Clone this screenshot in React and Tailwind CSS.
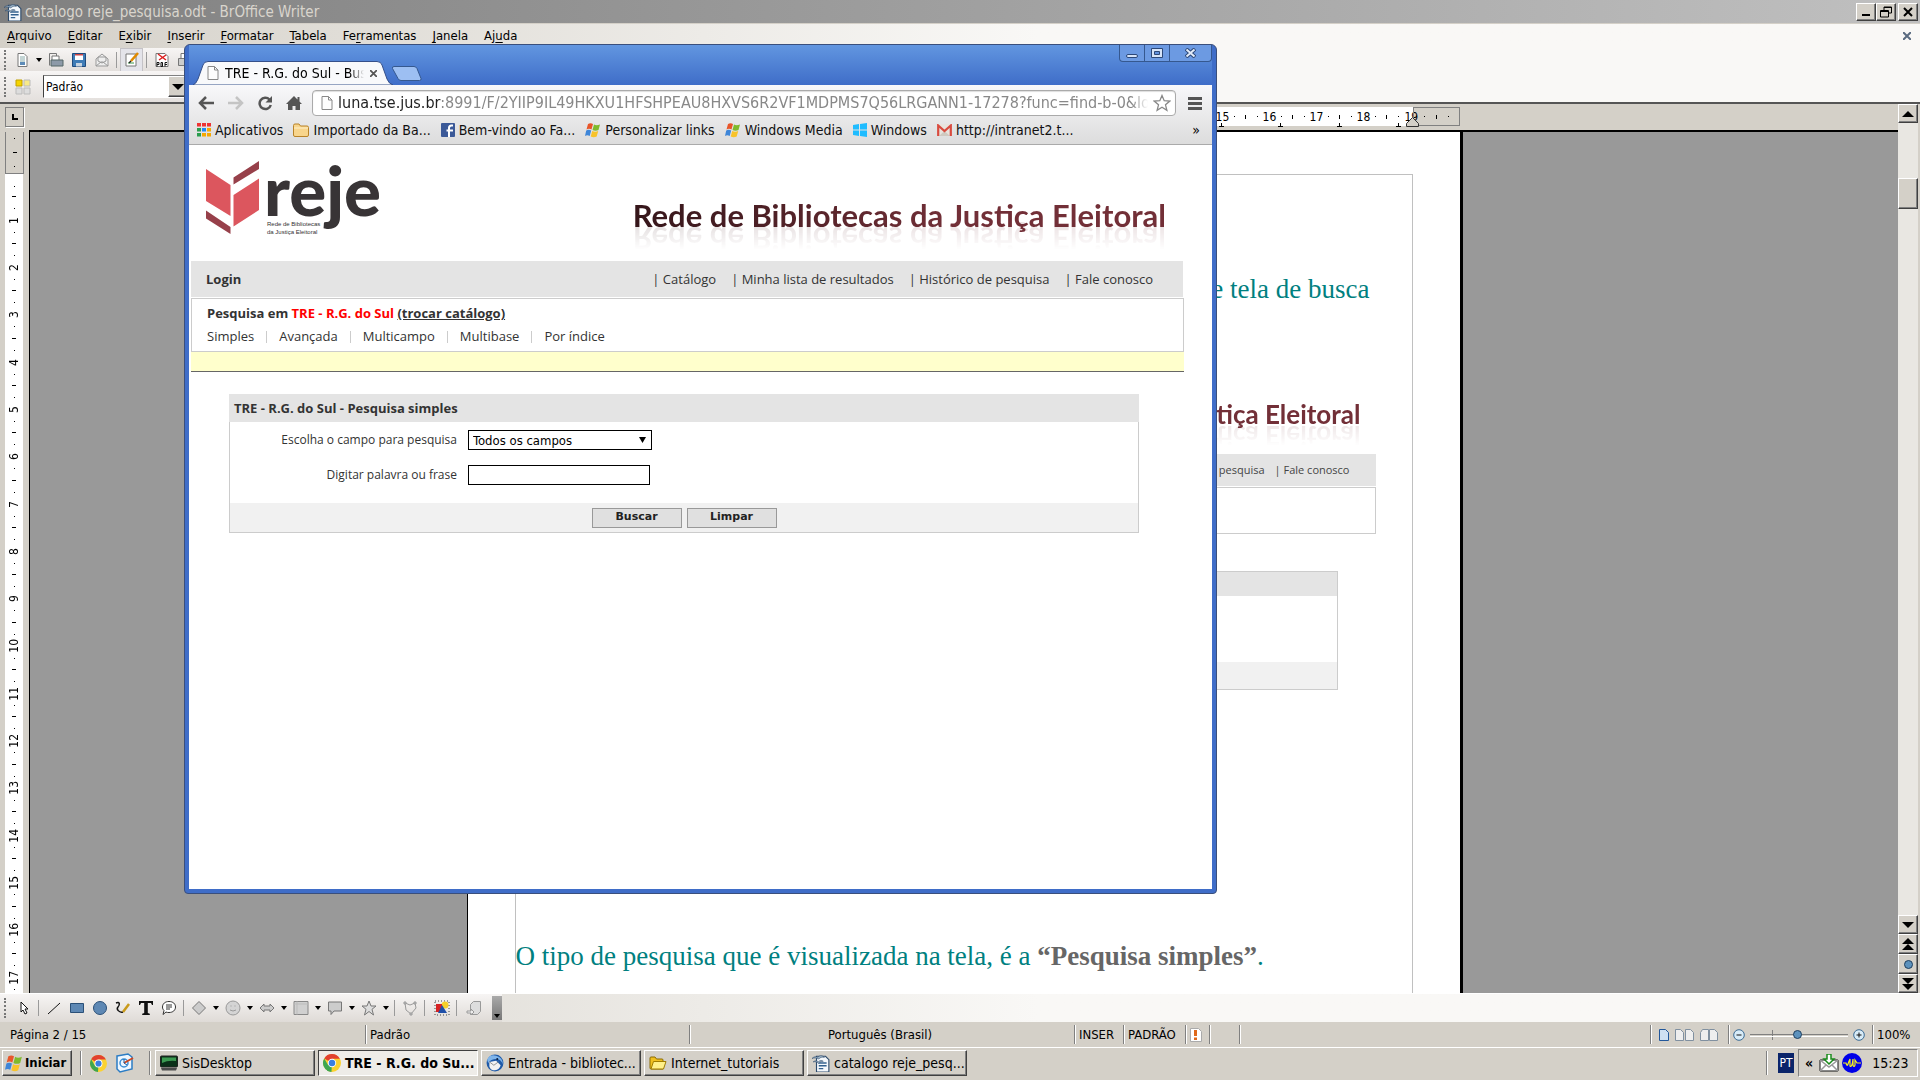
import { useState } from 'react'

const UI = "font-['DejaVu_Sans_Condensed','Noto_Sans',sans-serif]"
const WEB = "font-['Open_Sans','Noto_Sans',sans-serif]"
const RAISED = 'border border-t-white border-l-white border-r-[#404040] border-b-[#404040] bg-[#d4d0c8] shadow-[inset_-1px_-1px_0_#808080]'

const menus = [
  ['', 'A', 'rquivo'],
  ['', 'E', 'ditar'],
  ['E', 'x', 'ibir'],
  ['', 'I', 'nserir'],
  ['', 'F', 'ormatar'],
  ['', 'T', 'abela'],
  ['Fe', 'r', 'ramentas'],
  ['', 'J', 'anela'],
  ['Aj', 'u', 'da'],
]

const bookmarks = [
  { label: 'Aplicativos', icon: AppsIcon },
  { label: 'Importado da Ba...', icon: FolderIcon },
  { label: 'Bem-vindo ao Fa...', icon: FacebookIcon },
  { label: 'Personalizar links', icon: WindowsFlag },
  { label: 'Windows Media', icon: WindowsFlag },
  { label: 'Windows', icon: WindowsTiles },
  { label: 'http://intranet2.t...', icon: GmailIcon },
]

const tasks = [
  { label: 'SisDesktop', icon: MonitorIcon },
  { label: 'TRE - R.G. do Su...', icon: ChromeIcon, active: true },
  { label: 'Entrada - bibliotec...', icon: ThunderbirdIcon },
  { label: 'Internet_tutoriais', icon: YellowFolderIcon },
  { label: 'catalogo reje_pesq...', icon: WriterIcon },
]

/* ---------- icons ---------- */

function WriterIcon({ className = 'size-4' }) {
  return (
    <svg viewBox="0 0 16 16" className={className} aria-hidden="true">
      <path d="M4 2h8l3 3v11H4z" fill="#f4f8fc" stroke="#2c4a6b" />
      <path d="M6 8h7M6 10.500h7M6 13h4" stroke="#33618f" strokeWidth="1.300" />
      <path d="M0 4c2-2 4-2 5-1 2-2 4-2 6 0-2-.5-4 0-5 1.500C4.500 3.500 2 3 0 4zM1 7c2-1.500 3.500-1 4.500 0C7 5.500 9 5.500 10 6.500 8 6.500 7 7 6 8.500 4.500 7 3 6.500 1 7z" fill="#9fb6c8" stroke="#2c4a6b" strokeWidth=".5" />
    </svg>
  )
}

function AppsIcon() {
  const colors = ['#e33', '#e33', '#e33', '#2a9d4e', '#1e88f5', '#f5a800', '#2a9d4e', '#f5a800', '#f5a800']
  return (
    <svg viewBox="0 0 14 14" className="size-3.5" aria-hidden="true">
      {colors.map((c, i) => (
        <rect key={i} x={(i % 3) * 5} y={Math.floor(i / 3) * 5} width="4" height="3.500" fill={c} />
      ))}
    </svg>
  )
}

function FolderIcon() {
  return (
    <svg viewBox="0 0 16 14" className="h-3.5 w-4" aria-hidden="true">
      <path d="M.5 12V2.500Q.5 1 2 1h4l1.500 2H14q1.500 0 1.500 1.500V12q0 1.500-1.500 1.500H2Q.5 13.500.5 12z" fill="#f8d58c" stroke="#b98328" />
      <path d="M1 5h14" stroke="#fff0c8" />
    </svg>
  )
}

function FacebookIcon() {
  return (
    <svg viewBox="0 0 14 14" className="size-3.5" aria-hidden="true">
      <rect width="14" height="14" rx="1" fill="#3b5998" />
      <path d="M12 2.500h-1.500Q8 2.500 8 5v9M5.500 7.500H12" stroke="#fff" strokeWidth="2" fill="none" />
    </svg>
  )
}

function WindowsFlag({ className = 'size-4' }) {
  return (
    <svg viewBox="0 0 16 16" className={className} aria-hidden="true">
      <path d="M3 2q2.500-1.500 5 0L6.500 7.500Q4 6 1.500 7.500z" fill="#e8562a" />
      <path d="M9 2.500q2.500 1.500 6 0L13.500 8Q10.500 9.500 7.500 8z" fill="#7fba2c" />
      <path d="M1.200 8.500q2.500-1.500 5 0L4.700 14q-2.500-1.500-4.700 0z" fill="#3f86d8" />
      <path d="M7.200 9q3 1.500 6 0l-1.500 5.500q-3 1.500-6 0z" fill="#f8c32a" />
    </svg>
  )
}

function WindowsTiles() {
  return (
    <svg viewBox="0 0 14 14" className="size-3.5" aria-hidden="true">
      <path d="M0 2l6-1v5.500H0zM7 .9L14 0v6.500H7zM0 7.500h6V13l-6-1zM7 7.500h7V14l-7-.9z" fill="#1fbcff" />
    </svg>
  )
}

function GmailIcon() {
  return (
    <svg viewBox="0 0 15 12" className="h-3 w-[15px]" aria-hidden="true">
      <path d="M1 0h13v12H1z" fill="#e8e4de" />
      <path d="M2 12l5.500-5 5.500 5z" fill="#cfc9c0" />
      <path d="M1.200 12V1.500L7.500 7l6.300-5.500V12" fill="none" stroke="#d94b3f" strokeWidth="2.200" />
    </svg>
  )
}

function ChromeIcon({ className = 'size-4' }) {
  return (
    <svg viewBox="0 0 16 16" className={className} aria-hidden="true">
      <circle cx="8" cy="8" r="8" fill="#fbd22f" />
      <path d="M8 8L1.100 4A8 8 0 0 1 15 4.200H8z" fill="#e2412f" />
      <path d="M8 8l-3 7.400A8 8 0 0 1 1.100 4L4.600 10z" fill="#3fa650" />
      <path d="M8 8l-.5 8A8 8 0 0 1 3.500 14.600L4.600 10z" fill="#3fa650" />
      <circle cx="8" cy="8" r="3.700" fill="#fff" />
      <circle cx="8" cy="8" r="2.900" fill="#3b7fe0" />
    </svg>
  )
}

function ThunderbirdIcon({ className = 'size-4' }) {
  return (
    <svg viewBox="0 0 16 16" className={className} aria-hidden="true">
      <circle cx="8" cy="8" r="7.500" fill="#1f5aa8" />
      <path d="M1 5Q3 0 9 1.500 15 3 15 9q-2-5-7-4.500Q4 5 2 8z" fill="#7fb4ea" />
      <path d="M3 7l6-1 4 4q-1 4-5 4.500-4 0-5-3.500z" fill="#f2f2f2" />
      <path d="M3 7l4 3 4-3" stroke="#8a8a8a" fill="none" strokeWidth=".8" />
      <circle cx="10" cy="4.500" r=".9" fill="#0b1d3c" />
    </svg>
  )
}

function YellowFolderIcon({ className = 'size-4' }) {
  return (
    <svg viewBox="0 0 18 16" className={className} aria-hidden="true">
      <path d="M1 13V3q0-1 1-1h4l1.500 2H13q1 0 1 1v9H2q-1 0-1-1z" fill="#f0c020" stroke="#8a6a00" />
      <path d="M2 14L4.500 6.500H17L14.500 14z" fill="#fff08a" stroke="#a07c00" />
    </svg>
  )
}

function MonitorIcon({ className = 'size-4' }) {
  return (
    <svg viewBox="0 0 18 16" className={className} aria-hidden="true">
      <rect x=".5" y="1" width="17" height="11" rx="1" fill="#0a3018" stroke="#222" />
      <path d="M2 2.500h14V6Q8 5 2 8z" fill="#3c9a52" />
      <path d="M1 13h16l-1 2.500H2z" fill="#4b4b4b" />
    </svg>
  )
}

function NotesIcon() {
  return (
    <svg viewBox="0 0 20 20" className="size-5" aria-hidden="true">
      <path d="M2 3l11-2 4 3v12L5 19l-3-3z" fill="#eef7ff" stroke="#2b7cc4" strokeWidth="1.500" />
      <circle cx="9" cy="10" r="4" fill="none" stroke="#3b8fd6" strokeWidth="1.500" />
      <path d="M9 10l9-5" stroke="#d0451b" strokeWidth="2" />
      <path d="M9 6v4l3 2" stroke="#1b5da0" fill="none" />
    </svg>
  )
}

function PageIcon() {
  return (
    <svg viewBox="0 0 12 14" className="h-3.5 w-3" aria-hidden="true">
      <path d="M1 .5h6.500L11 4v9.500H1z" fill="#fdfdfd" stroke="#888" />
      <path d="M7.500.5V4H11" fill="none" stroke="#888" />
    </svg>
  )
}

function Caret({ className = 'h-1 w-1.5' }) {
  return (
    <svg viewBox="0 0 6 4" preserveAspectRatio="none" className={className} aria-hidden="true">
      <path d="M0 0h6L3 4z" />
    </svg>
  )
}

function Triangle({ up }) {
  return (
    <svg viewBox="0 0 12 6" className="h-1.5 w-3" aria-hidden="true">
      <path d={up ? 'M0 6h12L6 0z' : 'M0 0h12L6 6z'} />
    </svg>
  )
}

function ToolSvg({ children }) {
  return (
    <svg viewBox="0 0 16 16" className="size-4" fill="none" stroke="#777" aria-hidden="true">
      {children}
    </svg>
  )
}

/* ---------- writer window ---------- */

function Grip() {
  return <span className="h-5 shrink-0 border-l-2 border-dotted border-[#777]" />
}

function Sep() {
  return <span className="mx-[3px] h-4 w-px shrink-0 bg-[#9a9a9a]" />
}

function Tool({ label, menu, pressed, children }) {
  return (
    <button
      type="button"
      aria-label={label}
      className={`flex h-6 shrink-0 items-center ${menu ? 'w-[34px] gap-1.5 pl-1' : 'w-[23px] justify-center'} ${pressed ? 'border border-[#c4c2c6] bg-[#e4e4ea]' : ''}`}
    >
      <ToolSvg>{children}</ToolSvg>
      {menu && <Caret />}
    </button>
  )
}

function WriterTop() {
  return (
    <header>
      <div className="flex h-6 items-center border-b border-[#d4d0c8] bg-linear-to-r from-[#808080] to-[#c0c0c0] pr-0.5 pl-1">
        <WriterIcon className="size-[18px]" />
        <h1 className="ml-[3px] flex-1 text-[15px] leading-5 text-[#d9d5cd]">catalogo reje_pesquisa.odt - BrOffice Writer</h1>
        <div className="flex">
          <button type="button" aria-label="Minimizar" className={`flex h-[18px] w-5 items-end justify-center pb-1 ${RAISED}`}>
            <span className="h-0.5 w-2 bg-black" />
          </button>
          <button type="button" aria-label="Restaurar" className={`flex h-[18px] w-5 items-center justify-center ${RAISED}`}>
            <svg viewBox="0 0 12 12" className="size-3" fill="none" stroke="#000" aria-hidden="true">
              <path d="M4 4V1h7.500v6H9M4 1.500h7.500M.5 4.500h8v6.500h-8zM.5 5.500h8" />
            </svg>
          </button>
          <button type="button" aria-label="Fechar" className={`ml-0.5 flex h-[18px] w-5 items-center justify-center ${RAISED}`}>
            <svg viewBox="0 0 10 10" className="size-2.5" stroke="#000" strokeWidth="2" aria-hidden="true">
              <path d="M1 1l8 8M9 1L1 9" />
            </svg>
          </button>
        </div>
      </div>
      <div className="bg-linear-to-r from-[#d4d0c8] to-[#f9f8f6] to-54%">
        <nav className="flex h-6 items-center gap-4 px-[7px] pr-[9px] text-[13px]">
          {menus.map(([pre, key, post]) => (
            <button key={pre + key + post} type="button">
              {pre}<span className="underline underline-offset-2">{key}</span>{post}
            </button>
          ))}
          <button type="button" aria-label="Fechar documento" className="ml-auto">
            <svg viewBox="0 0 8 8" className="size-2" stroke="#5a6b80" strokeWidth="2" aria-hidden="true">
              <path d="M0 0l8 8M8 0L0 8" />
            </svg>
          </button>
        </nav>
      </div>
      <div className="bg-[#f9f8f6]">
        <div className="flex h-[23px] w-48 items-center overflow-hidden bg-linear-to-b from-[#f7f5f4] to-[#e3dfdc] pl-1">
          <Grip />
          <span className="w-1 shrink-0" />
          <Tool label="Novo" menu>
            <path d="M4 1.500h6l3 3v10H4z" fill="#fff" />
            <path d="M6 5h5M6 7h5M6 9h5" stroke="#8aa" />
            <path d="M6 10h5v3H6z" fill="#5d8bb8" stroke="none" />
          </Tool>
          <Tool label="Abrir">
            <path d="M1.500 1.500v12M1.500 1.500h7v3" />
            <path d="M4 4h7v5H4z" fill="#fff" />
            <path d="M3 8h12v6H3z" fill="#8d9aa8" stroke="#566" />
          </Tool>
          <Tool label="Salvar">
            <path d="M1.500 1.500h13v13h-13z" fill="#3f7cb6" stroke="#1f4b7d" />
            <path d="M4 2h8v6H4z" fill="#fff" stroke="none" />
            <path d="M4 2h8v1.500H4z" fill="#c44" stroke="none" />
            <path d="M5 11h6v3.500H5z" fill="#c8d4e0" stroke="none" />
          </Tool>
          <Tool label="Enviar e-mail">
            <path d="M2 7l6-5 6 5v7H2z" fill="#eee" stroke="#999" />
            <path d="M2 14l5-4h2l5 4M4 5h8v4l-4 2-4-2z" stroke="#999" />
          </Tool>
          <Sep />
          <Tool label="Editar arquivo" pressed>
            <path d="M2 2h10v12H2z" fill="#fff" />
            <path d="M4 11h6" stroke="#3a9a4a" />
            <path d="M14 1L7 9" stroke="#e08a00" strokeWidth="2.500" />
            <path d="M7 9l-2 2" stroke="#222" strokeWidth="1.500" />
          </Tool>
          <Sep />
          <Tool label="Exportar como PDF">
            <path d="M2 1.500h9l3 3v10H2z" fill="#fff" />
            <path d="M4 2l8 6M12 3L5 8" stroke="#d22" strokeWidth="1.500" />
            <path d="M3 10.500v4M3 10.500h2v2H3M7 10.500v4h1.500v-4zM11 14.500v-4h2M11 12.500h2" stroke="#111" />
          </Tool>
          <Tool label="Imprimir">
            <path d="M4 1.500h8v5H4z" fill="#fff" />
            <path d="M1.500 6.500h13v7h-13z" fill="#ccc" />
          </Tool>
        </div>
        <div className="flex h-[31px] w-48 items-center bg-linear-to-b from-[#f7f5f4] to-[#e3dfdc] pl-1">
          <Grip />
          <span className="w-[5px] shrink-0" />
          <Tool label="Estilos">
            <path d="M1 1h6v6H1z" fill="#f5d400" stroke="#c0a000" />
            <path d="M9 1h6v6H9z" fill="#f7e98a" stroke="#bbb" />
            <path d="M1 9h6v6H1zM9 9h6v6H9z" fill="#ddd" stroke="#bbb" />
          </Tool>
          <div className="ml-[9px] flex h-[23px] flex-1 items-center border border-t-[#808080] border-l-[#404040] border-r-white border-b-white bg-white">
            <select aria-label="Aplicar estilo" className="h-full w-[124px] appearance-none pl-0.5 text-xs">
              <option>Padrão</option>
            </select>
            <span className={`flex h-full w-5 items-center justify-center ${RAISED}`}><Triangle /></span>
          </div>
        </div>
      </div>
    </header>
  )
}

function VerticalRuler() {
  return (
    <div className="flex min-h-0 flex-1 flex-col overflow-hidden text-xs" aria-hidden="true">
      <div className="mt-[5px] flex h-[42px] w-[19px] shrink-0 flex-col items-center justify-around border-r border-b border-l border-[#808080]">
        <span className="size-px bg-black" />
        <span className="h-px w-1 bg-black" />
        <span className="size-px bg-black" />
      </div>
      <div className="w-[18px] flex-1 bg-white">
        <div className="flex h-4 items-center justify-center">
          <span className="mt-2 size-px bg-black" />
        </div>
        {Array.from({ length: 17 }).map((_, i) => (
          <div key={i} className={`grid grid-rows-4 place-items-center ${i % 3 === 0 ? 'h-12' : 'h-[47px]'}`}>
            <span className="h-px w-1 bg-black" />
            <span className="size-px bg-black" />
            <span className="rotate-180 leading-none [writing-mode:vertical-rl]">{i + 1}</span>
            <span className="size-px bg-black" />
          </div>
        ))}
      </div>
    </div>
  )
}

function HorizontalRuler() {
  return (
    <div className="relative mx-auto flex h-[19px] w-[898px] justify-end bg-white text-xs" aria-hidden="true">
      {[15, 16, 17, 18].map((n) => (
        <div key={n} className="grid w-[47px] grid-cols-4 place-items-center">
          <span className="leading-none">{n}</span>
          <span className="size-px bg-black" />
          <span className="h-1 w-px bg-black" />
          <span className="size-px bg-black" />
        </div>
      ))}
      <span className="flex w-2 items-center leading-none">19</span>
      <div className="absolute right-3 -bottom-px flex gap-[54px]">
        {[0, 1, 2, 3].map((n) => (
          <svg key={n} viewBox="0 0 5 4" className="h-1 w-[5px]" aria-hidden="true"><path d="M2 0h1v3h2v1H0V3h2z" /></svg>
        ))}
      </div>
      <div className="absolute left-full flex h-[19px] w-[47px] items-center gap-[11px] border border-[#808080] pl-2.5">
        <span className="size-px bg-black" />
        <span className="h-1 w-px bg-black" />
        <span className="size-px bg-black" />
      </div>
      <svg viewBox="0 0 13 10" className="absolute -right-1.5 -bottom-px h-2.5 w-[13px]" aria-hidden="true">
        <path d="M6.500.5l6 6v3H.5v-3z" fill="#d4d0c8" stroke="#333" />
      </svg>
    </div>
  )
}

function ScrollColumn() {
  return (
    <div className="flex w-5 shrink-0 flex-col bg-[#e9e7e2]">
      <button type="button" aria-label="Rolar para cima" className={`flex h-[19px] items-center justify-center ${RAISED}`}><Triangle up /></button>
      <div className="flex-1 pt-[55px]">
        <div className={`h-[31px] ${RAISED}`} />
      </div>
      <button type="button" aria-label="Rolar para baixo" className={`flex h-[19px] items-center justify-center ${RAISED}`}><Triangle /></button>
      <button type="button" aria-label="Página anterior" className={`flex h-5 flex-col items-center justify-center ${RAISED}`}><Triangle up /><Triangle up /></button>
      <button type="button" aria-label="Navegação" className={`flex h-5 items-center justify-center ${RAISED}`}>
        <span className="size-[9px] rounded-full border border-[#1f3f5f] bg-[#5d92bd]" />
      </button>
      <button type="button" aria-label="Próxima página" className={`flex h-[19px] flex-col items-center justify-center ${RAISED}`}><Triangle /><Triangle /></button>
    </div>
  )
}

function DocumentPage() {
  return (
    <article className="mx-auto h-full w-[996px] overflow-hidden border-r-3 border-l border-black bg-white pt-[42px] pr-[47px] pl-[47px]">
      <div className="h-[900px] border border-[#c0c0c0] font-['Liberation_Serif',serif] text-[27px] leading-8 text-[#008080]">
        <p className="mt-[98px] pr-[42px] text-right">e tela de busca</p>
        <figure className={`mt-[93px] mr-9 ml-auto w-60 ${WEB}`}>
          <p className="pr-[15px] text-right font-['Lato',sans-serif] text-[26px] leading-8 font-bold text-[#722f37] [-webkit-box-reflect:below_-10px_linear-gradient(transparent_20%,rgba(0,0,0,0.15))]">
            tiça Eleitoral
          </p>
          <div className="mt-6 flex h-8 items-center justify-end gap-2.5 bg-[#e4e4e4] pr-[26px] text-[11px] text-[#444]">
            <span>pesquisa</span>
            <span>|&nbsp;Fale conosco</span>
          </div>
          <div className="mt-px h-[47px] border border-[#ccc]" />
          <div className="mt-[37px] mr-[38px] h-[119px] border border-[#ccc]">
            <div className="h-6 bg-[#e4e4e4]" />
            <div className="mt-[66px] h-[27px] bg-[#f1f1f1]" />
          </div>
        </figure>
        <p className="mt-[250px]">
          O tipo de pesquisa que é visualizada na tela, é a <b className="text-[#666]">“Pesquisa simples”</b>.
        </p>
      </div>
    </article>
  )
}

function Workspace() {
  return (
    <main className="flex min-h-0 flex-1 border-t-2 border-[#555] bg-[#d4d0c8] pl-[5px]">
      <div className="flex w-6 shrink-0 flex-col pt-[3px]">
        <button type="button" aria-label="Tabulação" className="flex h-5 w-[19px] shrink-0 items-center justify-center border border-[#808080] shadow-[1px_1px_0_#fff]">
          <span className="size-1.5 border-b-2 border-l-2 border-black" />
        </button>
        <VerticalRuler />
      </div>
      <div className="flex min-w-0 flex-1 flex-col">
        <div className="pt-[3px] pb-1">
          <HorizontalRuler />
        </div>
        <div className="min-h-0 flex-1 border-t-2 border-l border-black bg-[#999] pl-px">
          <DocumentPage />
        </div>
      </div>
      <ScrollColumn />
      <span className="w-0.5" />
    </main>
  )
}

function DrawingBar() {
  return (
    <div className="flex h-[29px] border-t border-white bg-linear-to-r from-[#d4d0c8] to-[#f9f8f6] to-54%">
      <div className="flex items-center bg-linear-to-b from-[#f7f5f4] to-[#dfdbd7] pl-1">
        <Grip />
        <span className="w-1.5" />
        <Tool label="Selecionar">
          <path d="M5 2l7 7H9l2 4-2 1-2-4-2 2z" fill="#fff" stroke="#111" />
        </Tool>
        <Sep />
        <Tool label="Linha"><path d="M2 14L14 3" stroke="#111" /></Tool>
        <Tool label="Retângulo"><path d="M1.500 3.500h13v9h-13z" fill="#5e88b4" stroke="#2b5078" /></Tool>
        <Tool label="Elipse"><circle cx="8" cy="8" r="6.500" fill="#5e88b4" stroke="#2b5078" /></Tool>
        <Tool label="Linha à mão livre">
          <path d="M1 3c4-2 4 2 2 4s1 6 5 5" stroke="#111" strokeWidth="1.500" />
          <path d="M14 4l-6 8" stroke="#c99a1a" strokeWidth="2.500" />
        </Tool>
        <Tool label="Texto"><path d="M1 5V1h14v4h-1l-1-2H9.800v10l2 .8V15H4.200v-1.200l2-.8V3H3L2 5z" fill="#111" stroke="none" /></Tool>
        <Tool label="Texto explicativo">
          <path d="M8 1.500c4 0 6.500 2.300 6.500 5.500S12 12.500 8 12.500c-1 0-2 0-3-.5l-3 2.500 1-4C2 9.500 1.500 8.500 1.500 7c0-3.200 2.500-5.500 6.500-5.500z" fill="#fff" stroke="#333" />
          <path d="M5 5h6M5 7h6M5 9h4" stroke="#333" />
        </Tool>
        <Sep />
        <Tool label="Formas básicas" menu><path d="M8 1.500L14.500 8 8 14.500 1.500 8z" fill="#ccc" /></Tool>
        <Tool label="Formas de símbolos" menu>
          <circle cx="8" cy="8" r="7" fill="#d4d4d4" stroke="#999" />
          <path d="M6 5.500v1M10 5.500v1M5 10q3 2 6 0" stroke="#999" />
        </Tool>
        <Tool label="Setas cheias" menu><path d="M1 8l4-4v2h6V4l4 4-4 4v-2H5v2z" fill="#ccc" /></Tool>
        <Tool label="Fluxogramas" menu>
          <path d="M1 1.500h14v13H1z" fill="#d0d0d0" stroke="#888" />
          <path d="M1 4h14M4 1.500v13" stroke="#bbb" />
        </Tool>
        <Tool label="Textos explicativos" menu><path d="M1.500 2h13v9H7l-3 3.500V11H1.500z" fill="#ccc" /></Tool>
        <Tool label="Estrelas" menu><path d="M8 1l2 5h5l-4 3.300L12.500 15 8 11.500 3.500 15 5 9.300 1 6h5z" fill="#ddd" /></Tool>
        <Sep />
        <Tool label="Pontos">
          <path d="M3 3l5 2 5-2 1 5-5 6-5-4z" stroke="#999" />
          <path d="M2 2h2v2H2zM12 2h2v2h-2zM8 13h2v2H8z" fill="#ccc" stroke="#999" />
        </Tool>
        <Sep />
        <span className="w-0.5" />
        <Tool label="Do arquivo">
          <path d="M1 1h14v14H1z" stroke="#444" strokeDasharray="1 2" />
          <circle cx="11" cy="5" r="3.500" fill="#f5cf2a" stroke="none" />
          <path d="M2 4h6v8H2z" fill="#d62222" stroke="none" />
          <path d="M8 5l5 8H4z" fill="#1f4fa8" stroke="none" />
        </Tool>
        <Sep />
        <span className="w-0.5" />
        <Tool label="Extrusão">
          <path d="M4.500 4.500l3-3h7v10l-3 3h-7z" fill="#ddd" stroke="#999" />
          <path d="M1 11h4V9l3 3-3 3v-2H1z" fill="#eee" stroke="#999" />
        </Tool>
        <span className="ml-[7px] flex h-6 w-2.5 items-end justify-center bg-linear-to-b from-[#aaa] to-[#777] pb-0.5"><Caret /></span>
      </div>
    </div>
  )
}

function StatusCell({ className = '', children }) {
  return <div className={`flex h-[19px] items-center border-l border-[#808080] pl-1 shadow-[inset_1px_0_0_#fff] ${className}`}>{children}</div>
}

function StatusBar() {
  const [zoom, setZoom] = useState(48)
  return (
    <footer className="flex h-[25px] items-center bg-[#d4d0c8] text-[13px]">
      <div className="w-[365px] pl-2.5">Página 2 / 15</div>
      <StatusCell className="w-[324px]">Padrão</StatusCell>
      <StatusCell className="w-[385px] justify-center pr-2">Português (Brasil)</StatusCell>
      <StatusCell className="w-[49px]">INSER</StatusCell>
      <StatusCell className="w-[62px]">PADRÃO</StatusCell>
      <StatusCell className="w-6">
        <svg viewBox="0 0 12 14" className="h-3.5 w-3" aria-hidden="true">
          <path d="M.5.5h8l3 3v10H.5z" fill="#fff" stroke="#aaa" />
          <path d="M4 2h3v6H4zM4 9.500h3v2.500H4z" fill="#e0691a" />
        </svg>
      </StatusCell>
      <StatusCell className="w-[30px]" />
      <StatusCell className="flex-1" />
      <StatusCell className="w-[78px] gap-1.5 pl-2">
        <svg viewBox="0 0 10 12" className="h-3 w-2.5" aria-hidden="true"><path d="M.5.5h6l3 3v8h-9z" fill="#cfe0f2" stroke="#22579a" /></svg>
        <svg viewBox="0 0 19 12" className="h-3 w-[19px]" aria-hidden="true"><path d="M.5.5h5l3 3v8h-8zM10.500.5h5l3 3v8h-8z" fill="#eee" stroke="#8090a0" /></svg>
        <svg viewBox="0 0 18 12" className="h-3 w-[18px]" aria-hidden="true"><path d="M2.500.5h6v11h-8v-8zM9.500.5h5l3 3v8h-8z" fill="#eee" stroke="#8090a0" /></svg>
      </StatusCell>
      <StatusCell className="w-36 gap-[5px]">
        <button type="button" aria-label="Reduzir zoom">
          <svg viewBox="0 0 12 12" className="size-3" fill="none" stroke="#3a6a94" aria-hidden="true"><circle cx="6" cy="6" r="5.300" fill="#d8ecf8" /><path d="M3.500 6h5" stroke="#111" /></svg>
        </button>
        <input
          type="range"
          aria-label="Zoom"
          value={zoom}
          onChange={(e) => setZoom(Number(e.target.value))}
          className="h-2.5 w-[98px] appearance-none bg-[linear-gradient(#808080,#808080),linear-gradient(#fff,#fff),linear-gradient(#808080,#808080)] bg-[size:100%_1px,100%_1px,1px_10px] bg-[position:0_4px,0_6px,22px_0] bg-no-repeat [&::-webkit-slider-thumb]:size-[9px] [&::-webkit-slider-thumb]:appearance-none [&::-webkit-slider-thumb]:rounded-full [&::-webkit-slider-thumb]:border [&::-webkit-slider-thumb]:border-[#1f3f5f] [&::-webkit-slider-thumb]:bg-[#5d92bd]"
        />
        <button type="button" aria-label="Aumentar zoom">
          <svg viewBox="0 0 12 12" className="size-3" fill="none" stroke="#3a6a94" aria-hidden="true"><circle cx="6" cy="6" r="5.300" fill="#d8ecf8" /><path d="M3.500 6h5M6 3.500v5" stroke="#111" /></svg>
        </button>
      </StatusCell>
      <StatusCell className="w-12">100%</StatusCell>
    </footer>
  )
}

/* ---------- taskbar ---------- */

function Taskbar() {
  return (
    <footer className="flex h-[33px] items-center border-t border-white bg-[#d4d0c8] pr-0.5 pb-0.5 pl-0.5 text-sm">
      <button type="button" className={`flex h-[26px] w-[70px] items-center gap-0.5 pl-0.5 text-[13px] font-bold ${RAISED}`}>
        <WindowsFlag className="size-[18px]" />
        <span>Iniciar</span>
      </button>
      <span className="ml-2 h-6 w-0.5 border-l border-[#808080] bg-white" />
      <button type="button" aria-label="Google Chrome" className="ml-2"><ChromeIcon className="size-[17px]" /></button>
      <button type="button" aria-label="Notas" className="ml-2"><NotesIcon /></button>
      <span className="mr-1 ml-3.5 h-6 w-0.5 border-l border-[#808080] bg-white" />
      <div className="flex flex-1 gap-[3px]">
        {tasks.map(({ label, icon: Icon, active }) => (
          <button
            key={label}
            type="button"
            className={`flex h-[26px] w-40 items-center gap-1 overflow-hidden pl-1 whitespace-nowrap ${
              active
                ? 'border border-t-[#404040] border-l-[#404040] border-r-white border-b-white bg-[#eeece8] font-bold'
                : RAISED
            }`}
          >
            <Icon className="size-[18px] shrink-0" />
            <span>{label}</span>
          </button>
        ))}
      </div>
      <span className="h-6 w-0.5 border-l border-[#808080] bg-white" />
      <span className="ml-2.5 flex h-5 w-4 items-center justify-center bg-[#0a246a] text-xs text-white">PT</span>
      <div className="ml-1 flex h-7 w-[120px] items-center border border-t-[#808080] border-l-[#808080] border-r-white border-b-white pl-1.5">
        <span className="font-bold">«</span>
        <svg viewBox="0 0 20 18" className="ml-1.5 h-[18px] w-5" aria-hidden="true">
          <path d="M1 6h18v11H1z" fill="#fff" stroke="#111" />
          <path d="M1 6l9 7 9-7M1 17l6-6M19 17l-6-6" stroke="#999" fill="none" strokeWidth="1.500" />
          <path d="M8 0h4v5h3l-5 5-5-5h3z" fill="#fff" stroke="#1a8a1a" strokeWidth="1.500" />
        </svg>
        <svg viewBox="0 0 20 20" className="ml-[3px] size-5" aria-hidden="true">
          <circle cx="10" cy="10" r="10" fill="#0000e8" />
          <path d="M1 10h3q1 4 2 1t2-5v7q2 2 3-7v6q1 3 2 0V7l2 3h4" fill="none" stroke="#f6f020" strokeWidth="1.200" />
        </svg>
        <span className="ml-2.5">15:23</span>
      </div>
    </footer>
  )
}

/* ---------- browser ---------- */

function BrowserTitle() {
  return (
    <div className="relative flex h-10 items-end bg-linear-to-b from-[#6296e0] to-[#3f6dc8]">
      <div className="relative ml-1 flex h-6 w-[200px] items-center gap-1.5 pl-3.5">
        <svg viewBox="0 0 200 24" className="absolute inset-0 h-6 w-[200px]" aria-hidden="true">
          <path d="M0 24Q3 23 5 18L10 4Q11 .5 15 .5H184Q188 .5 189 4L194 18Q196 23 200 24z" fill="#f8f9fb" stroke="#35508a" />
        </svg>
        <span className="relative"><PageIcon /></span>
        <span className="relative w-[139px] overflow-hidden mask-r-from-90% text-sm whitespace-nowrap">TRE - R.G. do Sul - Bus</span>
        <button type="button" aria-label="Fechar guia" className="relative">
          <svg viewBox="0 0 8 8" className="size-[7px]" stroke="#555" strokeWidth="2" aria-hidden="true"><path d="M0 0l8 8M8 0L0 8" /></svg>
        </button>
      </div>
      <button type="button" aria-label="Nova guia" className="-ml-0.5 mb-1">
        <svg viewBox="0 0 31 15" className="h-[15px] w-[31px]" aria-hidden="true">
          <path d="M3 .5h20q2 0 3 2l4 10q.5 2-1.500 2H10q-2 0-3-2L1.500 2.500Q1 .5 3 .5z" fill="#9dbff2" stroke="#35588f" />
        </svg>
      </button>
      <div className="absolute top-0 right-0 flex h-[17px] w-[93px] divide-x divide-[#35588f] rounded-b border border-t-0 border-[#35588f] bg-[#6c9ae2]">
        <button type="button" aria-label="Minimizar janela" className="flex w-[25px] items-end justify-center pb-[3px]">
          <span className="h-1 w-3 rounded-xs border border-[#2c4878] bg-[#d6e4f8]" />
        </button>
        <button type="button" aria-label="Maximizar janela" className="flex w-[25px] items-center justify-center">
          <svg viewBox="0 0 12 10" className="h-2.5 w-3" aria-hidden="true">
            <path d="M.5.5h11v9H.5z" fill="#d6e4f8" stroke="#2c4878" />
            <path d="M3.500 3.500h5v3h-5z" fill="#5f8fdc" stroke="#2c4878" />
          </svg>
        </button>
        <button type="button" aria-label="Fechar janela" className="flex flex-1 items-center justify-center">
          <svg viewBox="0 0 11 10" className="h-2.5 w-[11px]" aria-hidden="true">
            <path d="M1 1l9 8M10 1L1 9" stroke="#2c4878" strokeWidth="4" />
            <path d="M1.500 1.500l8 7M9.500 1.500l-8 7" stroke="#e2ecfa" strokeWidth="2" />
          </svg>
        </button>
      </div>
    </div>
  )
}

function NavBar() {
  return (
    <div className="bg-linear-to-b from-[#f8f8fa] to-[#dcdcdc]">
      <div className="flex h-9 items-center pr-2.5 pl-[9px]">
        <button type="button" aria-label="Voltar" className="w-[30px]">
          <svg viewBox="0 0 16 14" className="h-3.5 w-4" fill="none" stroke="#555" strokeWidth="2.500" aria-hidden="true"><path d="M8 1L2 7l6 6M2 7h14" /></svg>
        </button>
        <button type="button" aria-label="Avançar" className="w-[29px]">
          <svg viewBox="0 0 16 14" className="h-3.5 w-4" fill="none" stroke="#c4c4c4" strokeWidth="2.500" aria-hidden="true"><path d="M8 1l6 6-6 6M14 7H0" /></svg>
        </button>
        <button type="button" aria-label="Recarregar" className="w-[29px]">
          <svg viewBox="0 0 16 16" className="size-4" aria-hidden="true">
            <path d="M12.500 4.500A5.700 5.700 0 1 0 13.800 10" fill="none" stroke="#555" strokeWidth="2.500" />
            <path d="M15 1v6.500H8.500z" fill="#555" />
          </svg>
        </button>
        <button type="button" aria-label="Página inicial" className="w-[26px]">
          <svg viewBox="0 0 16 16" className="size-4" fill="#555" aria-hidden="true"><path d="M8 1L0 9h2v6h4.500v-4h3v4H14V9h2l-2.500-2.500V2h-2v2.500z" /></svg>
        </button>
        <div className="flex h-[26px] min-w-0 flex-1 items-center gap-[5px] rounded-sm border border-[#aaa] bg-white px-2 shadow-[inset_0_1px_1px_#ddd]">
          <PageIcon />
          <div className="min-w-0 flex-1 overflow-hidden mask-r-from-98% text-base leading-6 whitespace-nowrap text-[#888]">
            <span className="text-[#222]">luna.tse.jus.br</span>
            :8991/F/2YIIP9IL49HKXU1HFSHPEAU8HXVS6R2VF1MDPMS7Q56LRGANN1-17278?func=find-b-0&amp;lo
          </div>
          <button type="button" aria-label="Adicionar aos favoritos" className="-mr-1">
            <svg viewBox="0 0 18 18" className="size-[18px]" aria-hidden="true"><path d="M9 1.500l2.200 5.200 5.600.4-4.300 3.700 1.400 5.500L9 13.300l-4.900 3 1.400-5.500L1.200 7.100l5.600-.4z" fill="#fff" stroke="#888" strokeWidth="1.300" /></svg>
          </button>
        </div>
        <button type="button" aria-label="Menu" className="ml-3">
          <svg viewBox="0 0 14 13" className="h-[13px] w-3.5" fill="#555" aria-hidden="true"><path d="M0 0h14v3H0zM0 5h14v3H0zM0 10h14v3H0z" /></svg>
        </button>
      </div>
      <div className="flex h-6 items-center gap-2.5 border-b border-[#aaa] pr-3 pb-1.5 pl-2 text-sm">
        {bookmarks.map(({ label, icon: Icon }) => (
          <a key={label} href="#" className="flex items-center gap-1 whitespace-nowrap text-[#111]">
            <Icon />
            {label}
          </a>
        ))}
        <button type="button" aria-label="Mais favoritos" className="ml-auto">»</button>
      </div>
    </div>
  )
}

function RejeLogo() {
  return (
    <svg viewBox="0 0 180 80" className="h-20 w-[180px] overflow-visible" role="img" aria-label="reje">
      <path d="M0 8l24.500 16v31L0 40zM27.500 34L53 17.500V49L27.500 65.500z" fill="#dc565e" />
      <path d="M0 49.500L24.500 66v7L0 57.500zM27.500 16.500L53 0v8L27.500 23.500z" fill="#97404a" />
      <text x="58" y="55" className="font-['Lato',sans-serif] text-[69px] font-black" fill="#383436">reje</text>
      <text x="61" y="65" className="font-['Liberation_Sans_Narrow','Liberation_Sans',sans-serif] text-[6px]" fill="#333">Rede de Bibliotecas</text>
      <text x="61" y="73" className="font-['Liberation_Sans_Narrow','Liberation_Sans',sans-serif] text-[6px]" fill="#333">da Justiça Eleitoral</text>
    </svg>
  )
}

function CatalogPage() {
  const [term, setTerm] = useState('')
  return (
    <div className={`flex-1 bg-white pr-7 pl-0.5 text-[#333] ${WEB}`}>
      <div className="flex h-[116px] items-start justify-between pt-4 pr-[18px] pl-[15px]">
        <RejeLogo />
        <h2 className="mt-9 bg-linear-to-r from-[#35161a] to-[#722f37] to-60% bg-clip-text font-['Lato',sans-serif] text-[31px] leading-9 font-bold text-transparent [-webkit-box-reflect:below_-12px_linear-gradient(transparent_20%,rgba(0,0,0,0.16))]">
          Rede de Bibliotecas da Justiça Eleitoral
        </h2>
      </div>
      <div className="mr-px flex h-9 items-center justify-between bg-[#e4e4e4] pt-px pr-[30px] pl-[15px] text-[13px]">
        <a href="#" className="font-bold">Login</a>
        <nav className="flex gap-[15px]">
          {['Catálogo', 'Minha lista de resultados', 'Histórico de pesquisa', 'Fale conosco'].map((t) => (
            <span key={t}>|&nbsp;<a href="#">{t}</a></span>
          ))}
        </nav>
      </div>
      <div className="mt-px h-[54px] border border-[#ccc] pt-[3px] pl-[15px] text-[13px] leading-[23px]">
        <p className="font-bold">
          Pesquisa em <span className="text-[#f00]">TRE - R.G. do Sul</span>{' '}
          <a href="#" className="underline">(trocar catálogo)</a>
        </p>
        <nav className="flex items-center">
          {['Simples', 'Avançada', 'Multicampo', 'Multibase', 'Por índice'].map((t, i) => (
            <span key={t} className="flex items-center">
              {i > 0 && <span className="mx-3 h-3 w-px bg-[#ccc]" />}
              <a href="#">{t}</a>
            </span>
          ))}
        </nav>
      </div>
      <div className="h-5 border-b border-[#666] bg-[#ffffcc]" />

      <form className="mt-[22px] mr-[45px] ml-[38px] border border-[#ccc] text-[11px]" onSubmit={(e) => e.preventDefault()}>
        <h3 className="-mx-px -mt-px flex h-7 items-center bg-[#e4e4e4] pt-px pl-[5px] text-[13px] font-bold">TRE - R.G. do Sul - Pesquisa simples</h3>
        <div className="grid grid-cols-[227px_1fr] items-center gap-x-[11px] gap-y-[15px] pt-2 pb-[18px] text-xs leading-5">
          <label htmlFor="campo" className="text-right">Escolha o campo para pesquisa</label>
          <span className="relative w-[184px]">
            <select id="campo" className={`block h-5 w-full appearance-none border border-black bg-white pl-1 text-[13px] text-black ${UI}`}>
              <option>Todos os campos</option>
            </select>
            <Caret className="pointer-events-none absolute top-[7px] right-[6px] h-1.5 w-[7px]" />
          </span>
          <label htmlFor="termo" className="text-right">Digitar palavra ou frase</label>
          <input id="termo" value={term} onChange={(e) => setTerm(e.target.value)} className="h-5 w-[182px] border border-black px-1" />
        </div>
        <div className="flex h-[29px] items-center justify-center gap-[5px] bg-[#f1f1f1] font-['DejaVu_Sans',sans-serif] font-bold text-[#222]">
          <button type="submit" className="h-5 w-[90px] border border-[#999] bg-[#e0e0e0]">Buscar</button>
          <button type="reset" onClick={() => setTerm('')} className="h-5 w-[90px] border border-[#999] bg-[#e0e0e0]">Limpar</button>
        </div>
      </form>
    </div>
  )
}

function BrowserWindow() {
  return (
    <section className="absolute top-11 left-[184px] flex h-[850px] w-[1033px] flex-col rounded-t-md rounded-b-sm border border-[#3a4f7c] bg-[#3f6dc8] px-1 pb-1">
      <BrowserTitle />
      <NavBar />
      <CatalogPage />
    </section>
  )
}

export default function App() {
  return (
    <div className={`relative flex h-screen min-h-[1000px] flex-col overflow-hidden bg-[#d4d0c8] text-black ${UI}`}>
      <WriterTop />
      <Workspace />
      <DrawingBar />
      <StatusBar />
      <Taskbar />
      <BrowserWindow />
    </div>
  )
}
